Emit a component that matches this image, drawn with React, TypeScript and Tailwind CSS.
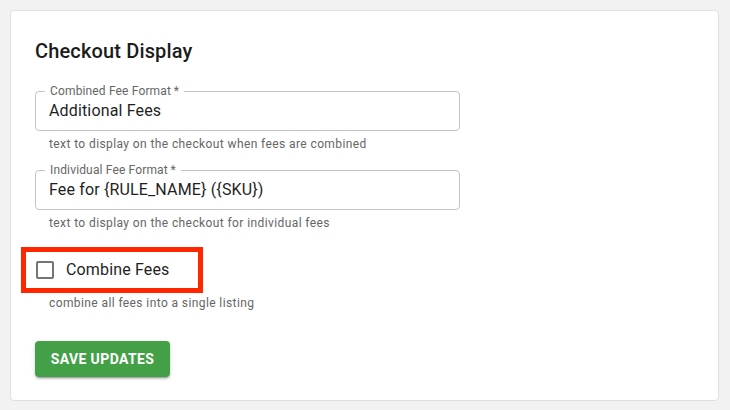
import React from 'react';

const OutlinedField: React.FC<{ label: string; value: string; helper: string; className?: string }> = ({
  label,
  value,
  helper,
  className,
}) => (
  <div className={className}>
    <div className="relative h-[40px] w-[425px] rounded-[4px] border border-[#c4c4c4]">
      <span className="absolute left-[9px] top-[-8px] bg-white px-[5px] text-[12px] leading-[14px] tracking-[0.15px] text-[#666666]">
        {label}&thinsp;*
      </span>
      <div className="flex h-full items-center pl-[13px] text-[16px] tracking-[0.15px] text-[#1f1f1f]">{value}</div>
    </div>
    <p className="mt-[3px] pl-[14px] text-[12px] leading-[20px] tracking-[0.4px] text-[#666666]">{helper}</p>
  </div>
);

const App: React.FC = () => {
  return (
    <div className="min-h-[410px] bg-[#f2f2f2] pt-[10px] pl-[10px] font-['Roboto',sans-serif]">
      <div className="w-[709px] rounded-[4px] border border-[#e0e0e0] bg-white pl-[24px] pt-[24px] pb-[23px]">
        <h2 className="text-[20px] font-medium leading-[32px] tracking-[0.15px] text-[#1c1c1c]">Checkout Display</h2>

        <OutlinedField
          className="mt-[24px]"
          label="Combined Fee Format"
          value="Additional Fees"
          helper="text to display on the checkout when fees are combined"
        />
        <OutlinedField
          className="mt-[16px]"
          label="Individual Fee Format"
          value="Fee for {RULE_NAME} ({SKU})"
          helper="text to display on the checkout for individual fees"
        />

        <div className="ml-[-14px] mt-[14px] flex h-[46px] w-[182px] items-center border-[5px] border-[#ff2600] pl-[10px]">
          <span className="h-[18px] w-[18px] rounded-[2px] border-2 border-[#757575]" />
          <span className="ml-[12px] text-[16px] tracking-[0.15px] text-[#1f1f1f]">Combine Fees</span>
        </div>
        <p className="pl-[14px] text-[12px] leading-[20px] tracking-[0.4px] text-[#666666]">
          combine all fees into a single listing
        </p>

        <button className="mt-[28px] flex h-[36px] w-[135px] items-center justify-center rounded-[4px] bg-[#43a047] text-[14px] font-bold tracking-[0.4px] text-white shadow-[0_3px_1px_-2px_rgba(0,0,0,0.2),0_2px_2px_0_rgba(0,0,0,0.14),0_1px_5px_0_rgba(0,0,0,0.12)]">
          SAVE UPDATES
        </button>
      </div>
    </div>
  );
};

export default App;
